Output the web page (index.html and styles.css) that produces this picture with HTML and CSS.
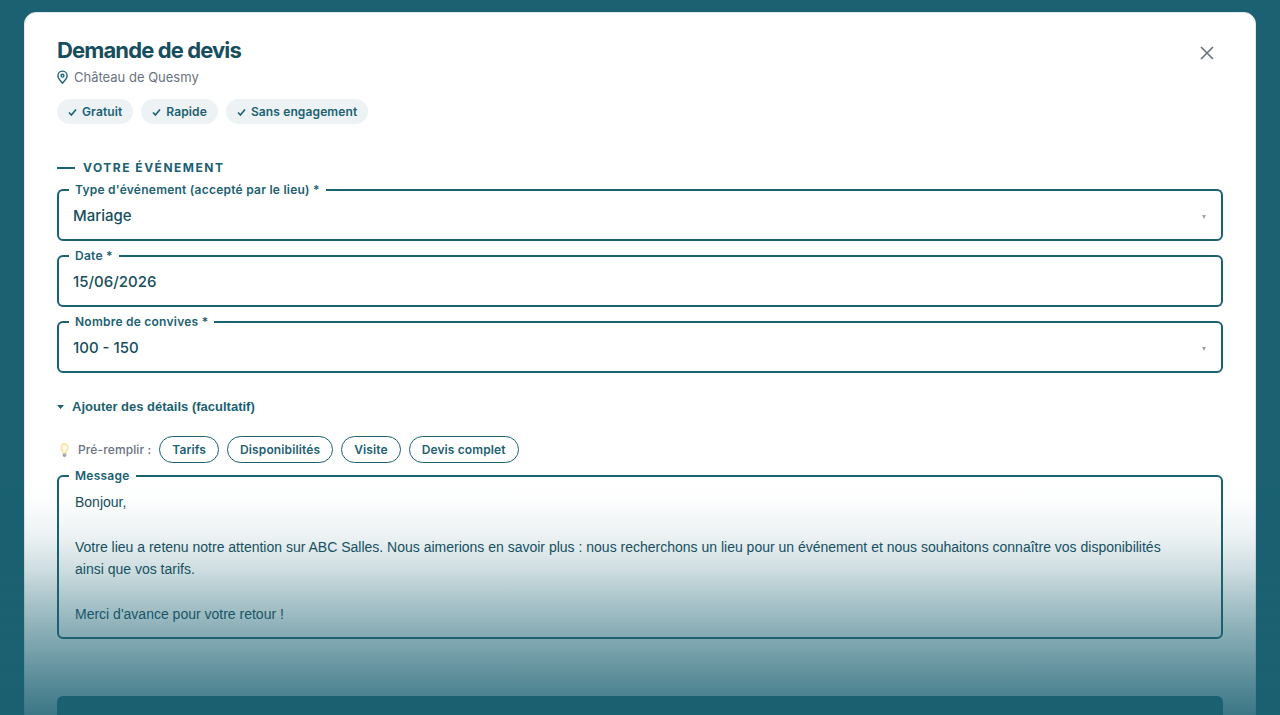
FILE: index.html
```html
<!DOCTYPE html>
<html lang="fr">
<head>
  <meta charset="UTF-8">
  <meta name="viewport" content="width=device-width, initial-scale=1.0">
  <title>Demande de devis</title>
  <link rel="stylesheet" href="styles.css">
</head>
<body>
  <main class="card">
    <header class="card-header">
      <div>
        <h1>Demande de devis</h1>
        <p class="place">
          <svg class="pin" viewBox="0 0 12 16" aria-hidden="true">
            <path d="M6 14.2C4.6 12.4 1 9.2 1 6a5 5 0 0 1 10 0c0 3.200-3.600 6.400-5 8.200z"/>
            <circle cx="6" cy="6" r="1.600"/>
          </svg>
          Château de Quesmy
        </p>
        <ul class="badges">
          <li><svg viewBox="0 0 9 9" aria-hidden="true"><path d="M1 5.500l2.400 2.500L8 2.500"/></svg>Gratuit</li>
          <li><svg viewBox="0 0 9 9" aria-hidden="true"><path d="M1 5.500l2.400 2.500L8 2.500"/></svg>Rapide</li>
          <li><svg viewBox="0 0 9 9" aria-hidden="true"><path d="M1 5.500l2.400 2.500L8 2.500"/></svg>Sans engagement</li>
        </ul>
      </div>
      <button type="button" class="close" aria-label="Fermer">
        <svg viewBox="0 0 14 14" aria-hidden="true"><path d="M1 1l12 12M13 1L1 13"/></svg>
      </button>
    </header>

    <form>
      <h2>Votre événement</h2>

      <div class="field">
        <label for="type">Type d'événement (accepté par le lieu) *</label>
        <select id="type">
          <option>Mariage</option>
        </select>
        <svg class="caret" viewBox="0 0 4 4" aria-hidden="true"><path d="M0 0h4L2 4z"/></svg>
      </div>

      <div class="field">
        <label for="date">Date *</label>
        <input type="text" id="date" value="15/06/2026">
      </div>

      <div class="field">
        <label for="convives">Nombre de convives *</label>
        <select id="convives">
          <option>100 - 150</option>
        </select>
        <svg class="caret" viewBox="0 0 4 4" aria-hidden="true"><path d="M0 0h4L2 4z"/></svg>
      </div>

      <button type="button" class="details">
        <svg viewBox="0 0 7 4" aria-hidden="true"><path d="M0 0h7L3.500 4z"/></svg>
        Ajouter des détails (facultatif)
      </button>

      <div class="prefill">
        <span class="hint">
          <svg class="bulb" viewBox="0 0 14 16" aria-hidden="true">
            <path class="glass" d="M7 1a4.300 4.300 0 0 0-4.300 4.300c0 2.700 2.100 3.700 2.300 6.200h4c.2-2.500 2.300-3.500 2.300-6.200A4.300 4.300 0 0 0 7 1z"/>
            <path class="shine" d="M7 3a2.500 2.500 0 0 0-2.500 2.500C4.500 7 6 8 6.200 10h1.600C8 8 9.500 7 9.500 5.500A2.500 2.500 0 0 0 7 3z"/>
            <path class="base" d="M5.200 11.500h3.600v2.300L7.800 15H6.200l-1-1.200z"/>
          </svg>
          Pré-remplir :
        </span>
        <button type="button" class="pill">Tarifs</button>
        <button type="button" class="pill">Disponibilités</button>
        <button type="button" class="pill">Visite</button>
        <button type="button" class="pill">Devis complet</button>
      </div>

      <div class="field">
        <label for="message">Message</label>
        <textarea id="message" rows="6">Bonjour,

Votre lieu a retenu notre attention sur ABC Salles. Nous aimerions en savoir plus : nous recherchons un lieu pour un événement et nous souhaitons connaître vos disponibilités ainsi que vos tarifs.

Merci d'avance pour votre retour !</textarea>
      </div>

      <button type="submit" class="submit" aria-label="Envoyer"></button>
    </form>
  </main>
  <div class="fade"></div>
</body>
</html>
```

FILE: styles.css
```css
* { box-sizing: border-box; }
body { margin: 0; height: 100vh; overflow: hidden; padding: 12px 24px; background: #1b6172; color: #164e5e; font-family: Inter, "Liberation Sans", sans-serif; }
button, input, select, textarea { font-family: inherit; color: inherit; }
.card { background: #fff; border: 1px solid #dfe9ec; border-radius: 12px; padding: 23px 32px; }

.card-header { display: flex; justify-content: space-between; align-items: flex-start; }
h1 { margin: 0; font-size: 22px; line-height: 28px; font-weight: 700; letter-spacing: -0.04em; }
.place { display: flex; align-items: center; gap: 6px; margin: 3px 0 0; font-size: 13px; line-height: 20px; color: #6b7280; }
.pin { width: 11px; height: 15px; fill: none; stroke: #1b6172; stroke-width: 1.5; }
.badges { display: flex; gap: 8px; margin: 12px 0 0; padding: 0; list-style: none; }
.badges li { display: flex; align-items: center; gap: 5px; padding: 0 11px; border-radius: 13px; background: #edf2f4; color: #1b6172; font-size: 12px; line-height: 25px; font-weight: 600; letter-spacing: 0.01em; }
.badges svg { width: 9px; height: 9px; fill: none; stroke: #1b6172; stroke-width: 1.6; }
.close { display: flex; align-items: center; justify-content: center; width: 32px; height: 34px; padding: 0; border: none; background: none; cursor: pointer; }
.close svg { width: 14px; height: 14px; fill: none; stroke: #6b7280; stroke-width: 1.7; }

h2 { display: flex; align-items: center; gap: 8px; margin: 34px 0 11px; font-size: 12px; line-height: 20px; font-weight: 700; letter-spacing: 0.125em; text-transform: uppercase; color: #1b6172; }
h2::before { content: ""; width: 18px; height: 2px; background: #1b6172; }

.field { position: relative; margin-bottom: 14px; }
.field label { position: absolute; top: -7px; left: 12px; padding: 0 6px; background: #fff; color: #1b6172; font-size: 12px; line-height: 16px; font-weight: 600; letter-spacing: 0.02em; }
.field input, .field select, .field textarea { display: block; width: 100%; border: 2px solid #1b6172; border-radius: 6px; background: transparent; outline: none; }
.field input, .field select { height: 52px; padding: 0 14px; font-size: 15px; font-weight: 500; appearance: none; }
.field textarea { height: 164px; padding: 14px 32px 14px 16px; font-family: "Liberation Sans", Arial, sans-serif; font-size: 14px; line-height: 1.6; resize: none; overflow: hidden; }
.caret { position: absolute; top: 26px; right: 17px; width: 4px; height: 4px; fill: #9ca3af; pointer-events: none; }

.details { display: flex; align-items: center; gap: 8px; margin: 24px 0 19px; padding: 0; border: none; background: none; color: #1b6172; font-family: "Liberation Sans", Arial, sans-serif; font-size: 13px; line-height: 20px; font-weight: 700; cursor: pointer; }
.details svg { width: 7px; height: 4px; fill: #1b6172; }
.prefill { display: flex; align-items: center; flex-wrap: wrap; gap: 8px; margin-bottom: 12px; }
.hint { display: flex; align-items: center; gap: 6px; color: #6b7280; font-size: 12px; font-weight: 500; letter-spacing: 0.01em; }
.bulb { width: 15px; height: 16px; }
.glass { fill: #fbe7a2; }
.shine { fill: #fffbea; }
.base { fill: #a8a8a8; }
.pill { height: 27px; padding: 0 12px; border: 1px solid #1b6172; border-radius: 14px; background: #fff; color: #1b6172; font-size: 12px; font-weight: 600; letter-spacing: 0.01em; cursor: pointer; }
.submit { display: block; width: 100%; height: 48px; margin-top: 57px; border: none; border-radius: 6px; background: #1b6172; }

/* page fades into the background colour at the bottom */
.fade { position: fixed; left: 0; right: 0; bottom: 0; height: 235px; pointer-events: none; background: linear-gradient(rgba(27,97,114,0), rgba(27,97,114,0.01) 9%, rgba(27,97,114,0.09) 25%, rgba(27,97,114,0.2) 37%, rgba(27,97,114,0.37) 51%, rgba(27,97,114,0.54) 67%, rgba(27,97,114,0.72) 85%, rgba(27,97,114,0.86)); }
```
